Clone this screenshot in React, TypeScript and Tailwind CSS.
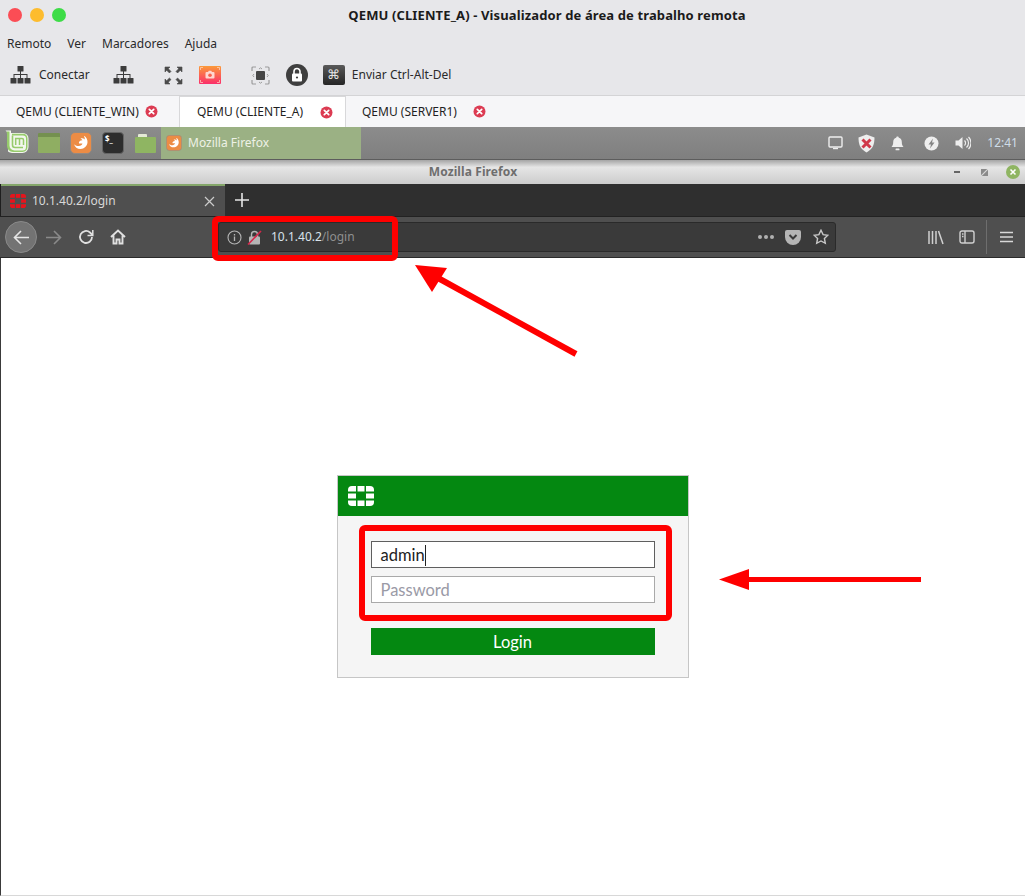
function Network({ className = "" }: { className?: string }) {
  return (
    <svg width="21" height="20" viewBox="0 0 21 20" className={className} fill="#3c3c3c">
      <rect x="7.5" y="1" width="6" height="5.5" rx="0.6" />
      <rect x="0.5" y="13" width="6" height="5.5" rx="0.6" />
      <rect x="7.5" y="13" width="6" height="5.5" rx="0.6" />
      <rect x="14.5" y="13" width="6" height="5.5" rx="0.6" />
      <path d="M10 6h1v3h6.500v4h-1v-3H11v3h-1v-3H4.500v3h-1V9H10z" />
    </svg>
  );
}

function CloseBadge() {
  return (
    <svg width="13" height="13" viewBox="0 0 13 13">
      <circle cx="6.5" cy="6.5" r="6" fill="#dc3b52" />
      <path d="M4.3 4.3l4.4 4.4M8.7 4.3l-4.4 4.4" stroke="#fff" strokeWidth="1.7" strokeLinecap="round" />
    </svg>
  );
}

function FortiLogo({ color, width = 26, height = 20 }: { color: string; width?: number; height?: number }) {
  return (
    <svg width={width} height={height} viewBox="0 0 26 20" fill={color} preserveAspectRatio="none">
      <path d="M9.500 0H16.500V5.500H9.500z" />
      <path d="M9.500 14.500H16.500V20H9.500z" />
      <path d="M0 7.500H8V12.500H0z" />
      <path d="M18 7.500H26V12.500H18z" />
      <path d="M8 0V5.500H0V4Q0 0 4 0z" />
      <path d="M18 0V5.500H26V4Q26 0 22 0z" />
      <path d="M8 20V14.500H0V16Q0 20 4 20z" />
      <path d="M18 20V14.500H26V16Q26 20 22 20z" />
    </svg>
  );
}

function FirefoxIcon({ size = 22 }: { size?: number }) {
  return (
    <svg width={size} height={size} viewBox="0 0 22 22">
      <rect x="0.500" y="0.500" width="21" height="21" rx="4.500" fill="#ec8c45" stroke="#8a8a8a" strokeWidth="0.800" />
      <path d="M14.500 4c2 1.300 3.200 3.700 3 6.300-.3 3.900-3.300 6.700-7 6.700-3.200 0-5.800-2-6.500-5 1.200 1.500 3 2.200 4.800 2 1.900-.2 3.400-1.300 3.600-2.600H9c-.5-1.800 1-3.200 3.400-3.200-.3-.8-1-1.300-1.900-1.500 1.400-.7 3-.4 4.200.7.200-1-.1-2.100-.7-3.400z" fill="#fff" />
    </svg>
  );
}

function MintLogo() {
  return (
    <svg width="24" height="24" viewBox="0 0 24 24" className="ml-[5px] mb-[3px]">
      <path d="M0.500 0.500H6V3H18a5.500 5.500 0 0 1 5.500 5.500V17a6 6 0 0 1-6 6H7a6.500 6.500 0 0 1-4-1.500V3z" fill="#f3f7ee" />
      <path d="M1.500 1.500H4.500V15.500a5 5 0 0 0 5 5H17.500a3.500 3.500 0 0 0 3.500-3.500V8.500a3 3 0 0 0-3-3H7V3.800H18a4.500 4.500 0 0 1 4.500 4.500V17a5 5 0 0 1-5 5H8a6 6 0 0 1-6-6V4z" fill="#97cb6c" />
      <path d="M7.500 5.500V15a2.500 2.500 0 0 0 2.500 2.500H18" fill="none" stroke="#97cb6c" strokeWidth="1.600" />
      <path d="M10.700 15V8.500H17a1.500 1.500 0 0 1 1.500 1.500V15M14.500 8.500V15" fill="none" stroke="#97cb6c" strokeWidth="1.500" />
    </svg>
  );
}

export default function App() {
  return (
    <div className="relative w-[1025px] h-[896px] overflow-hidden bg-white font-['Noto_Sans',sans-serif]">
      {/* mac title bar */}
      <div className="bg-[#e7e7ea] h-[96px] flex flex-col">
        <div className="h-[32px] flex items-center relative">
          <div className="flex gap-[8px] pl-[8px] pb-[2px]">
            <div className="w-[14px] h-[14px] rounded-full bg-[#fb4d55]" />
            <div className="w-[14px] h-[14px] rounded-full bg-[#fdbc2e]" />
            <div className="w-[14px] h-[14px] rounded-full bg-[#3ddc47]" />
          </div>
          <div className="flex-1 text-center text-[13px] font-bold text-[#1b1b1b] tracking-[0.12px] pl-[3px]">
            QEMU (CLIENTE_A) - Visualizador de área de trabalho remota
          </div>
        </div>
        <div className="h-[24px] flex items-center gap-[16px] pl-[7px] text-[12px] text-[#2a2a2a]">
          <span>Remoto</span>
          <span>Ver</span>
          <span>Marcadores</span>
          <span>Ajuda</span>
        </div>
        <div className="flex-1 flex items-center text-[12px] text-[#2a2a2a] pl-[10px] pb-[1px] border-b border-[#d4d4d6]">
          <Network />
          <span className="ml-[8px]">Conectar</span>
          <Network className="ml-[23px]" />
          <svg width="19" height="19" viewBox="0 0 19 19" className="ml-[30px]" fill="#4a4a4a" stroke="#4a4a4a">
            <path d="M1 1h5L4.300 2.700 7 5.400 5.400 7 2.700 4.300 1 6zM18 1h-5l1.700 1.700L12 5.400 13.600 7l2.700-2.700L18 6zM1 18h5l-1.700-1.700L7 13.600 5.400 12l-2.700 2.700L1 13zM18 18h-5l1.700-1.700-2.700-2.700 1.600-1.600 2.700 2.700L18 13z" strokeWidth="0.600" />
          </svg>
          <svg width="22" height="18" viewBox="0 0 22 18" className="ml-[16px]">
            <defs>
              <linearGradient id="shot" x1="0" y1="0" x2="0" y2="1">
                <stop offset="0" stopColor="#fb9a3a" />
                <stop offset="1" stopColor="#fb2f6b" />
              </linearGradient>
            </defs>
            <rect width="22" height="18" rx="1" fill="url(#shot)" />
            <path d="M1.500 4V1.500H4M18 1.500h2.500V4M1.500 14v2.500H4M18 16.500h2.500V14" fill="none" stroke="#ffd9c4" strokeWidth="0.700" />
            <path d="M7.500 6h1.500l.8-1.200h2.400L13 6h1.500a1 1 0 0 1 1 1v4.500a1 1 0 0 1-1 1h-7a1 1 0 0 1-1-1V7a1 1 0 0 1 1-1z" fill="#ffd6d0" />
            <circle cx="11" cy="9.200" r="1.800" fill="#f8604e" />
          </svg>
          <svg width="19" height="19" viewBox="0 0 19 19" className="ml-[30px]" fill="none">
            <rect x="5" y="5" width="9" height="9" rx="1" fill="#454545" />
            <path d="M1 5V2a1 1 0 0 1 1-1h3M14 1h3a1 1 0 0 1 1 1v3M18 14v3a1 1 0 0 1-1 1h-3M5 18H2a1 1 0 0 1-1-1v-3" stroke="#9c9c9c" strokeWidth="1.200" />
            <path d="M8 3l1.500-1.200L11 3M8 16l1.500 1.200L11 16M3 8L1.800 9.500 3 11M16 8l1.200 1.500L16 11" stroke="#9c9c9c" strokeWidth="1" />
          </svg>
          <svg width="22" height="22" viewBox="0 0 22 22" className="ml-[16px]">
            <circle cx="11" cy="11" r="11" fill="#3f3f3f" />
            <rect x="6" y="9.500" width="10" height="8" rx="1" fill="#fff" />
            <path d="M8 10V7.500a3 3 0 0 1 6 0V10" fill="none" stroke="#fff" strokeWidth="1.600" />
            <circle cx="11" cy="13.500" r="1.100" fill="#3f3f3f" />
          </svg>
          <div className="ml-[15px] w-[22px] h-[20px] rounded-[2px] bg-gradient-to-b from-[#5a5a5a] to-[#262626] text-[#e4e4e4] text-[13px] flex items-center justify-center">⌘</div>
          <span className="ml-[7px]">Enviar Ctrl-Alt-Del</span>
        </div>
      </div>

      {/* connection tabs */}
      <div className="h-[31px] flex bg-[#f6f6f8] text-[12px] text-[#1f1f1f]">
        <div className="w-[180px] flex items-center pl-[16px] border-r border-[#d8d8da]">
          <span className="w-[129px]">QEMU (CLIENTE_WIN)</span>
          <CloseBadge />
        </div>
        <div className="w-[166px] flex items-center pl-[17px] bg-white border-r border-t border-[#d8d8da]">
          <span className="w-[123px]">QEMU (CLIENTE_A)</span>
          <CloseBadge />
        </div>
        <div className="flex items-center pl-[16px]">
          <span className="w-[111px]">QEMU (SERVER1)</span>
          <CloseBadge />
        </div>
      </div>

      {/* mint panel */}
      <div className="h-[33px] bg-gradient-to-b from-[#8c8c8c] to-[#7f7f7f] flex items-center border-b border-[#5d5d5d]">
        <MintLogo />
        <div className="ml-[9px] w-[22px] h-[20px] bg-[#8fae62] border-t-[4px] border-[#74904f] rounded-[1px]" />
        <div className="ml-[10px]"><FirefoxIcon /></div>
        <div className="ml-[10px] w-[22px] h-[22px] rounded-[4px] bg-[#2d2d2d] border border-[#666] text-white text-[8px] leading-[12px] pl-[2px] font-bold">$_</div>
        <div className="ml-[11px] relative w-[21px] h-[16px] mt-[3px]">
          <div className="absolute left-[3px] top-[-3px] w-[9px] h-[4px] bg-[#e4ead6] rounded-t-[1px]" />
          <div className="absolute inset-0 bg-[#8fb562] rounded-[1px]" />
        </div>
        <div className="ml-[5px] w-[200px] h-[32px] bg-[#9bb184] flex items-center pl-[5px]">
          <FirefoxIcon size={16} />
          <span className="ml-[6px] text-[12px] text-[#eef2e6]">Mozilla Firefox</span>
        </div>
        <div className="ml-auto flex items-center">
          <svg width="15" height="14" viewBox="0 0 15 14" fill="none">
            <rect x="1" y="1" width="13" height="10" rx="1" stroke="#eee" strokeWidth="1.400" />
            <path d="M5 12.500h5" stroke="#eee" strokeWidth="1.400" />
          </svg>
          <svg width="19" height="19" viewBox="0 0 19 19" className="ml-[14px]">
            <path d="M9.500 0.500l8 3c0 6.500-1.500 11.500-8 15-6.500-3.500-8-8.500-8-15z" fill="#eee" />
            <path d="M5.500 5.500l8 8M13.500 5.500l-8 8" stroke="#d0394a" strokeWidth="3" />
          </svg>
          <svg width="13" height="15" viewBox="0 0 13 15" className="ml-[15px]" fill="#eee">
            <path d="M6.500 0.500c.8 0 1.200.5 1.300 1.200 2 .5 3 2.200 3 4.300 0 2.500.6 3.800 1.700 5H.5c1.100-1.200 1.700-2.500 1.700-5 0-2.100 1-3.800 3-4.300C5.300 1 5.700.5 6.500.5z" />
            <rect x="4.500" y="12.500" width="4" height="1.800" rx="0.900" />
          </svg>
          <svg width="15" height="15" viewBox="0 0 15 15" className="ml-[20px]">
            <circle cx="7.500" cy="7.500" r="7" fill="#eee" />
            <path d="M9 2.500L4.500 8.500h2.500L6 12.500l4.500-6H8z" fill="#858585" />
          </svg>
          <svg width="16" height="14" viewBox="0 0 16 14" className="ml-[16px]" fill="none">
            <path d="M0.500 4.500h3l4-3.500v12l-4-3.500h-3z" fill="#eee" />
            <path d="M9.500 4.500a3.500 3.500 0 0 1 0 5M11.500 2.500a6 6 0 0 1 0 9M13.500 1a8.500 8.500 0 0 1 0 12" stroke="#eee" strokeWidth="1.200" />
          </svg>
          <span className="ml-[16px] mr-[7px] text-[12px] text-[#cfdde8]">12:41</span>
        </div>
      </div>

      {/* firefox window title */}
      <div className="h-[24px] bg-gradient-to-b from-[#a5a5a5] via-[#e6e6e6] via-30% to-[#cccccc] flex items-center">
        <div className="flex-1 text-center text-[12px] font-bold text-[#6e6e6e] tracking-[0.1px] pr-[8px]">Mozilla Firefox</div>
        <div className="w-[6px] h-[2px] bg-[#666] mr-[21px]" />
        <svg width="7" height="7" viewBox="0 0 7 7" className="mr-[18px]">
          <rect width="7" height="7" fill="#8a8a8a" />
          <path d="M0 7L7 0" stroke="#d8d8d8" strokeWidth="1.200" />
        </svg>
        <svg width="14" height="14" viewBox="0 0 14 14" className="mr-[5px]">
          <circle cx="7" cy="7" r="7" fill="#8fb562" />
          <path d="M4.500 4.500l5 5M9.500 4.500l-5 5" stroke="#fff" strokeWidth="1.600" />
        </svg>
      </div>

      {/* firefox tab strip */}
      <div className="h-[32px] bg-[#2f2f2f] flex border-l border-[#1e1e1e]">
        <div className="w-[224px] bg-[#4f4f4f] border-t-2 border-[#84a66a] flex items-center pl-[9px] pr-[10px]">
          <FortiLogo color="#e8141c" width={16} height={14} />
          <span className="ml-[6px] text-[12px] text-[#d8d8d8]">10.1.40.2/login</span>
          <svg width="11" height="11" viewBox="0 0 11 11" className="ml-auto">
            <path d="M1 1l9 9M10 1l-9 9" stroke="#ccc" strokeWidth="1.200" />
          </svg>
        </div>
        <svg width="14" height="14" viewBox="0 0 14 14" className="ml-[10px] mt-[9px]">
          <path d="M7 0v14M0 7h14" stroke="#e6e6e6" strokeWidth="1.600" />
        </svg>
      </div>

      {/* firefox nav bar */}
      <div className="h-[42px] bg-[#4f4f4f] flex items-center border-t border-[#222] border-b border-b-[#2a2a2a] pl-[5px]">
        <div className="w-[32px] h-[32px] rounded-full bg-[#737373] border border-[#8a8a8a] flex items-center justify-center">
          <svg width="17" height="15" viewBox="0 0 17 15" fill="none" stroke="#e6e6e6" strokeWidth="1.600">
            <path d="M16 7.500H2M8 1L1.500 7.500 8 14" />
          </svg>
        </div>
        <svg width="17" height="15" viewBox="0 0 17 15" fill="none" stroke="#8a8a8a" strokeWidth="1.600" className="ml-[8px]">
          <path d="M1 7.500h14M9 1l6.500 6.500L9 14" />
        </svg>
        <svg width="16" height="16" viewBox="0 0 16 16" fill="none" stroke="#e0e0e0" strokeWidth="1.800" className="ml-[16px]">
          <path d="M14 8a6 6 0 1 1-2-4.500L14.500 6" />
          <path d="M14.800 1v5.500H9.500" strokeWidth="1.500" />
        </svg>
        <svg width="16" height="16" viewBox="0 0 16 16" fill="none" stroke="#e0e0e0" strokeWidth="1.900" className="ml-[16px]">
          <path d="M1 8l7-6.500L15 8M3.500 6.500V14.500h3v-4h3v4h3V6.500" />
        </svg>
        <div className="ml-[92px] w-[618px] h-[30px] bg-[#3a3a3a] border border-[#2a2a2a] rounded-[3px] flex items-center pl-[8px] pr-[6px]">
          <svg width="15" height="15" viewBox="0 0 15 15" fill="none">
            <circle cx="7.500" cy="7.500" r="6.500" stroke="#b5b5b5" strokeWidth="1.100" />
            <path d="M7.500 6.500v4.500M7.500 4v1.500" stroke="#b5b5b5" strokeWidth="1.300" />
          </svg>
          <svg width="15" height="15" viewBox="0 0 15 15" className="ml-[5px]" fill="none">
            <rect x="2" y="6.500" width="11" height="8" rx="1" fill="#b5b5b5" />
            <path d="M4.500 7V4.500a3 3 0 0 1 6 0V7" stroke="#b5b5b5" strokeWidth="1.400" />
            <path d="M1 14.500L14 1" stroke="#d7264a" strokeWidth="1.600" />
          </svg>
          <span className="ml-[9px] text-[12px] text-[#d8e2ea]">10.1.40.2<span className="text-[#8f8f8f]">/login</span></span>
          <div className="ml-auto flex items-center">
            <div className="flex gap-[2px]">
              <div className="w-[4px] h-[4px] rounded-full bg-[#b0b0b0]" />
              <div className="w-[4px] h-[4px] rounded-full bg-[#b0b0b0]" />
              <div className="w-[4px] h-[4px] rounded-full bg-[#b0b0b0]" />
            </div>
            <svg width="16" height="15" viewBox="0 0 16 15" className="ml-[11px]">
              <path d="M2 0h12a2 2 0 0 1 2 2v5a8 8 0 0 1-16 0V2a2 2 0 0 1 2-2z" fill="#b5b5b5" />
              <path d="M4.500 5L8 8.500 11.500 5" stroke="#3a3a3a" strokeWidth="2" fill="none" />
            </svg>
            <svg width="16" height="16" viewBox="0 0 16 16" className="ml-[12px]" fill="none" stroke="#c9c9c9" strokeWidth="1.400">
              <path d="M8 1.200l2.100 4.400 4.800.6-3.500 3.300.9 4.800L8 12l-4.300 2.300.9-4.800L1.100 6.200l4.800-.6z" />
            </svg>
          </div>
        </div>
        <svg width="16" height="15" viewBox="0 0 16 15" className="ml-[92px]" fill="none" stroke="#d0d0d0" strokeWidth="1.500">
          <path d="M1 1v13M4.500 1v13M8 1v13M10.500 1l4.500 13" />
        </svg>
        <svg width="16" height="14" viewBox="0 0 16 14" className="ml-[15px]" fill="none" stroke="#d0d0d0" strokeWidth="1.400">
          <rect x="1" y="1" width="14" height="12" rx="2" />
          <path d="M6 1v12M3 4h1.500M3 6.500h1.500" />
        </svg>
        <div className="w-px h-[34px] bg-[#6e6e6e] ml-[11px]" />
        <svg width="13" height="12" viewBox="0 0 13 12" className="ml-[13px]" stroke="#d8d8d8" strokeWidth="1.600">
          <path d="M0 1.500h13M0 6h13M0 10.500h13" />
        </svg>
      </div>

      {/* login page */}
      <div className="h-[638px] border-l border-[#3a3a3a] border-b border-b-[#d8d8d8] flex justify-center font-['Lato',sans-serif]">
        <div className="mt-[217px] w-[352px] h-[203px] bg-[#f5f5f5] border border-[#c6c6c6] flex flex-col self-start mr-[1px]">
          <div className="h-[40px] bg-[#048811] flex items-center pl-[10px]">
            <FortiLogo color="#fff" />
          </div>
          <div className="flex flex-col px-[33px] pt-[25px]">
            <div className="h-[27px] bg-white border border-[#5f5f5f] flex items-center pl-[8px] pt-[1px] text-[16.5px] text-[#222]">
              <span className="pl-[1px]">admin</span><span className="w-px h-[21px] bg-[#222]" />
            </div>
            <div className="h-[27px] mt-[8px] bg-white border border-[#a9a9a9] flex items-center pl-[8px] pt-[1px] text-[16.5px] text-[#9a9aa6]">
              <span className="pl-[1px]">Password</span>
            </div>
            <div className="h-[27px] mt-[25px] bg-[#048811] text-white text-[16.5px] pt-[1px] flex items-center justify-center">
              Login
            </div>
          </div>
        </div>
      </div>

      {/* annotations drawn over the screenshot */}
      <div className="absolute left-[212px] top-[216px] w-[186px] h-[45px] border-[6px] border-[#ff0000] rounded-[6px]" />
      <div className="absolute left-[359px] top-[525px] w-[313px] h-[96px] border-[6px] border-[#ff0000] rounded-[6px]" />
      <svg width="1025" height="896" viewBox="0 0 1025 896" className="absolute left-0 top-0 pointer-events-none">
        <path d="M576 354L438 278" stroke="#ff0000" strokeWidth="6" />
        <path d="M415 265L447 268L432 292z" fill="#ff0000" />
        <path d="M921 579.500H746" stroke="#ff0000" strokeWidth="5" />
        <path d="M719 579.500L749 569V590z" fill="#ff0000" />
      </svg>
    </div>
  );
}
